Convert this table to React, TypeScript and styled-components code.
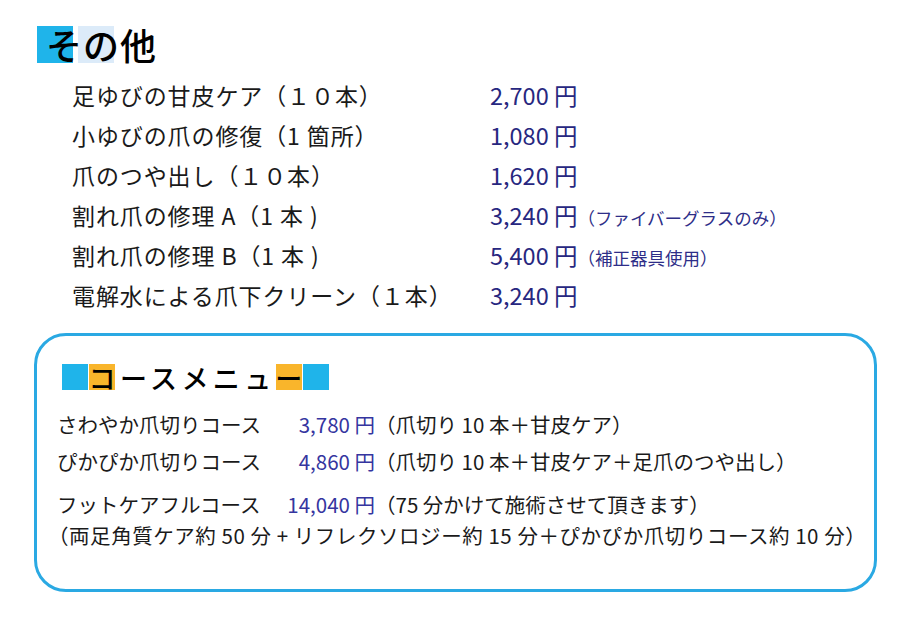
import React from "react";
import styled, { createGlobalStyle } from "styled-components";

const GlobalStyle = createGlobalStyle`
  html, body { margin: 0; padding: 0; background: #ffffff; }
  body {
    width: 900px;
    height: 620px;
    overflow: hidden;
    font-family: "Noto Sans CJK JP", "Noto Sans", sans-serif;
    color: #1a1a1a;
  }
`;

const Page = styled.div`
  padding: 26px 0 0 34px;
  display: flex;
  flex-direction: column;
`;

const MainHeading = styled.h1`
  position: relative;
  margin: 0;
  height: 37px;
  display: flex;
  align-items: center;
  font-size: 36px;
  font-weight: 500;
  line-height: 1;
  letter-spacing: 1px;
  padding-left: 12px;
  color: #000;
`;

const HeadingSquare = styled.span<{ $left: number; $color: string }>`
  position: absolute;
  top: 0;
  left: ${(p) => p.$left}px;
  width: 36px;
  height: 37px;
  background: ${(p) => p.$color};
  z-index: 0;
`;

const HeadingText = styled.span`
  position: relative;
  z-index: 1;
  margin-top: -2px;
`;

const ItemList = styled.div`
  margin-top: 12px;
  margin-left: 38px;
  display: grid;
  grid-template-columns: 418px auto;
  grid-auto-rows: 40px;
  align-items: center;
`;

const ItemLabel = styled.span`
  font-size: 23px;
  letter-spacing: 0.9px;
  color: #1a1a1a;
  white-space: nowrap;
`;

const Price = styled.span<{ $size: number; $color: string }>`
  font-size: ${(p) => p.$size}px;
  color: ${(p) => p.$color};
  white-space: nowrap;
`;

const ItemNote = styled.span`
  font-size: 17.5px;
  color: #2e2e88;
`;

const CourseBox = styled.section`
  margin-top: 18px;
  box-sizing: content-box;
  width: 817px;
  height: 225px;
  border: 3px solid #2aa9e3;
  border-radius: 32px;
  padding: 28px 0 0 20px;
`;

const CourseHeading = styled.h2`
  margin: 0 0 0 5px;
  display: flex;
  align-items: center;
  height: 26px;
  font-size: 27px;
  font-weight: 500;
  line-height: 1;
  color: #000;
`;

const Square = styled.span<{ $color: string }>`
  width: 26px;
  height: 26px;
  background: ${(p) => p.$color};
  display: flex;
  align-items: center;
  justify-content: center;
  flex-shrink: 0;
  margin-right: 1px;
`;

const CourseTitle = styled.span`
  letter-spacing: 4.4px;
  margin: 0 0 0 4px;
`;

const CourseGrid = styled.div`
  margin-top: 15px;
  display: grid;
  grid-template-columns: 206px 112px auto;
  align-items: center;
  font-size: 20.5px;
  color: #1a1a1a;
`;

const CourseRow = styled.div<{ $gap: number }>`
  display: contents;
  & > * {
    height: 37px;
    margin-top: ${(p) => p.$gap}px;
    display: flex;
    align-items: center;
    white-space: nowrap;
  }
`;

const CourseLabel = styled.span``;

const CoursePrice = styled(Price)`
  justify-content: flex-end;
`;

const CourseNote = styled.span``;

const FullLine = styled.div`
  grid-column: 1 / -1;
  height: 25px;
  margin-left: -9px;
  letter-spacing: 0.55px;
  display: flex;
  align-items: center;
  white-space: nowrap;
`;

const items: { label: string; price: string; note?: string }[] = [
  { label: "足ゆびの甘皮ケア（１０本）", price: "2,700 円" },
  { label: "小ゆびの爪の修復（1 箇所）", price: "1,080 円" },
  { label: "爪のつや出し（１０本）", price: "1,620 円" },
  { label: "割れ爪の修理 A（1 本 )", price: "3,240 円", note: "（ファイバーグラスのみ）" },
  { label: "割れ爪の修理 B（1 本 )", price: "5,400 円", note: "（補正器具使用）" },
  { label: "電解水による爪下クリーン（１本）", price: "3,240 円" },
];

const courses: { label: string; price: string; note: string; gap: number }[] = [
  { label: "さわやか爪切りコース", price: "3,780 円", note: "（爪切り 10 本＋甘皮ケア）", gap: 0 },
  { label: "ぴかぴか爪切りコース", price: "4,860 円", note: "（爪切り 10 本＋甘皮ケア＋足爪のつや出し）", gap: 0 },
  { label: "フットケアフルコース", price: "14,040 円", note: "（75 分かけて施術させて頂きます）", gap: 6 },
];

export default function App() {
  return (
    <>
      <GlobalStyle />
      <Page>
        <MainHeading>
          <HeadingSquare $left={3} $color="#1fb4ea" />
          <HeadingSquare $left={44} $color="#dcebf9" />
          <HeadingText>その他</HeadingText>
        </MainHeading>
        <ItemList>
          {items.map((it) => (
            <React.Fragment key={it.label}>
              <ItemLabel>{it.label}</ItemLabel>
              <span>
                <Price $size={23.5} $color="#27277f">{it.price}</Price>
                {it.note && <ItemNote>{it.note}</ItemNote>}
              </span>
            </React.Fragment>
          ))}
        </ItemList>
        <CourseBox>
          <CourseHeading>
            <Square $color="#1fb4ea" />
            <Square $color="#f9b52b">コ</Square>
            <CourseTitle>ースメニュ</CourseTitle>
            <Square $color="#f9b52b">ー</Square>
            <Square $color="#1fb4ea" />
          </CourseHeading>
          <CourseGrid>
            {courses.map((c) => (
              <CourseRow key={c.label} $gap={c.gap}>
                <CourseLabel>{c.label}</CourseLabel>
                <CoursePrice $size={20.5} $color="#3535a0">{c.price}</CoursePrice>
                <CourseNote>{c.note}</CourseNote>
              </CourseRow>
            ))}
            <FullLine>
              （両足角質ケア約 50 分 + リフレクソロジー約 15 分＋ぴかぴか爪切りコース約 10 分）
            </FullLine>
          </CourseGrid>
        </CourseBox>
      </Page>
    </>
  );
}
